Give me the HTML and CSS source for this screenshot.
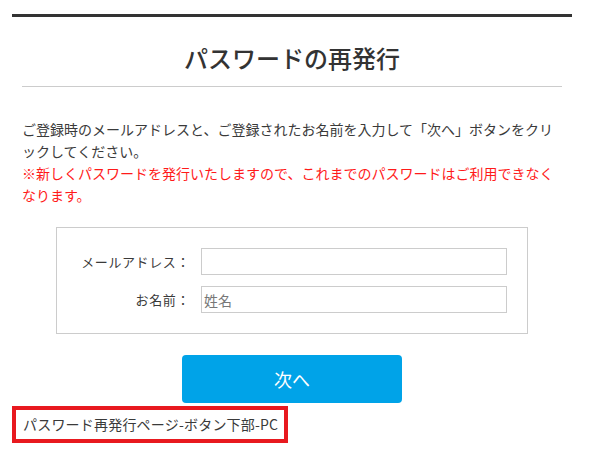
FILE: index.html
```html
<!DOCTYPE html>
<html lang="ja">
<head>
  <meta charset="UTF-8" />
  <meta name="viewport" content="width=device-width, initial-scale=1.0"/>
  <title>パスワードの再発行</title>
  <link rel="stylesheet" href="styles.css">
</head>
<body>
  <div class="page">
    <div class="page-body">
      <h1 class="page-title">パスワードの再発行</h1>

      <p class="lead">
        ご登録時のメールアドレスと、ご登録されたお名前を入力して「次へ」ボタンをクリックしてください。<br>
        <span class="note">※新しくパスワードを発行いたしますので、これまでのパスワードはご利用できなくなります。</span>
      </p>

      <!-- Reissue Form -->
      <form class="reissue-form" id="reissueForm">
        <div class="form-box">
          <label class="form-label" for="email">メールアドレス：</label>
          <input class="form-input" type="text" id="email" />
          <label class="form-label" for="name">お名前：</label>
          <input class="form-input" type="text" id="name" placeholder="姓名" />
        </div>
        <div class="form-actions">
          <button type="submit" class="next-btn">次へ</button>
        </div>
      </form>
    </div>

    <div class="slot-label">パスワード再発行ページ-ボタン下部-PC</div>
  </div>
</body>
</html>
```

FILE: styles.css
```css
body {
  font-family: "Noto Sans CJK JP", "Noto Sans", sans-serif;
  margin: 0;
  padding: 0;
  background: #fff;
  color: #3a3a3a;
}

.page {
  width: 560px;
  margin: 14px 0 0 12px;
  border-top: 3px solid #333;
}

.page-body {
  padding: 0 10px;
}

.page-title {
  margin: 0;
  padding: 23px 0 10px;
  font-size: 24px;
  line-height: 36px;
  font-weight: 500;
  text-align: center;
  color: #333;
  border-bottom: 1px solid #ccc;
}

.lead {
  margin: 31px 0 0;
  font-size: 14px;
  line-height: 22px;
}

.note {
  color: #ff1a1a;
}

.form-box {
  box-sizing: border-box;
  width: 472px;
  margin: 21px auto 0;
  padding: 20px;
  border: 1px solid #ccc;
  display: grid;
  grid-template-columns: 113px 1fr;
  column-gap: 11px;
  row-gap: 11px;
  align-items: center;
}

.form-label {
  font-size: 13px;
  letter-spacing: 0.6px;
  text-align: right;
}

.form-input {
  box-sizing: border-box;
  height: 27px;
  margin: 0;
  padding: 0 2px;
  border: 1px solid #ccc;
  border-radius: 0;
  font-family: inherit;
  font-size: 14px;
  color: #333;
  outline: none;
}

.form-input::placeholder {
  color: #777;
}

.form-actions {
  display: flex;
  justify-content: center;
  margin-top: 21px;
}

.next-btn {
  width: 220px;
  height: 48px;
  border: none;
  border-radius: 4px;
  background-color: #00a3e8;
  color: #fff;
  font-family: inherit;
  font-size: 18px;
  cursor: pointer;
}

.slot-label {
  display: inline-block;
  margin-top: 3px;
  padding: 4px 6px 4px 7px;
  border: 4px solid #e8191f;
  font-size: 14px;
  line-height: 21px;
  letter-spacing: 0.2px;
}
```
